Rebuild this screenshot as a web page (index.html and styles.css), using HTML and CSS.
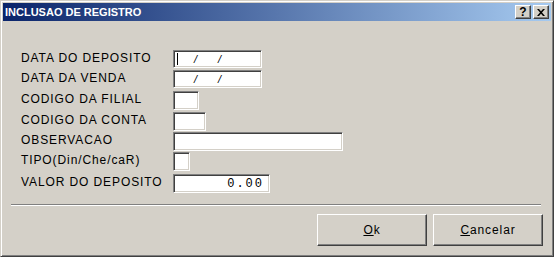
FILE: index.html
```html
<!DOCTYPE html>
<html lang="pt">
<head>
    <meta charset="UTF-8">
    <title>Inclusao de Registro</title>
    <link rel="stylesheet" href="styles.css">
</head>
<body>
    <div class="window">
        <div class="titlebar">
            <span class="title">INCLUSAO DE REGISTRO</span>
            <div class="caption-buttons">
                <span class="cap-btn help">?</span>
                <span class="cap-btn close">
                    <svg width="8" height="7" viewBox="0 0 8 7">
                        <path d="M0 0h2l2 2.2L6 0h2L5 3.5 8 7H6L4 4.8 2 7H0l3-3.5z" fill="#000"/>
                    </svg>
                </span>
            </div>
        </div>
        <div class="content">
            <div class="form">
                <label>DATA DO DEPOSITO</label>
                <div class="field date"><span class="caret"></span><span class="slash">/</span><span class="slash">/</span></div>

                <label>DATA DA VENDA</label>
                <div class="field date"><span class="slash">/</span><span class="slash">/</span></div>

                <label>CODIGO DA FILIAL</label>
                <div class="field filial"></div>

                <label>CODIGO DA CONTA</label>
                <div class="field conta"></div>

                <label>OBSERVACAO</label>
                <div class="field obs"></div>

                <label>TIPO(Din/Che/caR)</label>
                <div class="field tipo"></div>

                <label>VALOR DO DEPOSITO</label>
                <div class="field valor">0.00</div>
            </div>
            <div class="separator"></div>
            <div class="actions">
                <button class="btn"><u>O</u>k</button>
                <button class="btn"><u>C</u>ancelar</button>
            </div>
        </div>
    </div>
</body>
</html>
```

FILE: styles.css
```css
body {
    margin: 0;
    padding: 0;
    background-color: #d4d0c8;
    font-family: "Liberation Sans", Arial, sans-serif;
}
.window {
    width: 554px;
    height: 257px;
    box-sizing: border-box;
    background-color: #d4d0c8;
    border: 1px solid;
    border-color: #d4d0c8 #404040 #404040 #d4d0c8;
    box-shadow: inset 1px 1px #fff, inset -1px -1px #808080;
    padding: 2px;
    display: flex;
    flex-direction: column;
}
.titlebar {
    height: 18px;
    background: linear-gradient(to right, #0a246a, #a6caf0);
    display: flex;
    justify-content: space-between;
    align-items: center;
    padding: 0 2px 0 2px;
}
.title {
    color: white;
    font-weight: bold;
    font-size: 11px;
    line-height: 18px;
}
.caption-buttons {
    display: flex;
    gap: 2px;
}
.cap-btn {
    width: 16px;
    height: 14px;
    box-sizing: border-box;
    background-color: #d4d0c8;
    border: 1px solid;
    border-color: #fff #404040 #404040 #fff;
    box-shadow: inset -1px -1px #808080;
    display: flex;
    justify-content: center;
    align-items: center;
    font-weight: bold;
    font-size: 12px;
    line-height: 12px;
    color: #000;
}
.content {
    flex: 1;
    padding: 29px 8px 0 8px;
}
.form {
    display: grid;
    grid-template-columns: 152px auto;
    grid-template-rows: 20px 21px 21px 20px 20px 22px 19px;
    padding-left: 10px;
}
.form label {
    font-size: 12px;
    letter-spacing: 0.9px;
    line-height: 16px;
    color: #000;
}
.field {
    height: 19px;
    box-sizing: border-box;
    background-color: #fff;
    border: 1px solid;
    border-color: #808080 #fff #fff #808080;
    box-shadow: inset 1px 1px #404040, inset -1px -1px #d4d0c8;
    justify-self: start;
    display: flex;
    align-items: center;
    font-size: 11px;
}
.date {
    width: 89px;
    height: 18px;
    position: relative;
    padding-left: 20px;
    gap: 21px;
}
.caret {
    position: absolute;
    left: 3px;
    top: 2px;
    width: 1px;
    height: 12px;
    background-color: #000;
}
.slash {
    font-style: italic;
}
.filial { width: 26px; }
.conta { width: 33px; }
.obs { width: 170px; }
.tipo { width: 17px; }
.valor {
    width: 97px;
    justify-content: flex-end;
    padding-right: 5px;
    font-family: "Liberation Mono", monospace;
    font-size: 12px;
    letter-spacing: 2px;
    color: #000;
}
.separator {
    margin: 11px 0 0 0;
    width: 530px;
    height: 1px;
    background-color: #808080;
    border-bottom: 1px solid #fff;
}
.actions {
    display: flex;
    justify-content: flex-end;
    gap: 6px;
    margin-top: 8px;
}
.btn {
    width: 110px;
    height: 32px;
    background-color: #d4d0c8;
    border: 1px solid;
    border-color: #fff #404040 #404040 #fff;
    box-shadow: inset -1px -1px #808080;
    font-family: "Liberation Sans", Arial, sans-serif;
    font-size: 12px;
    letter-spacing: 0.9px;
    color: #000;
    padding: 0;
}
```
